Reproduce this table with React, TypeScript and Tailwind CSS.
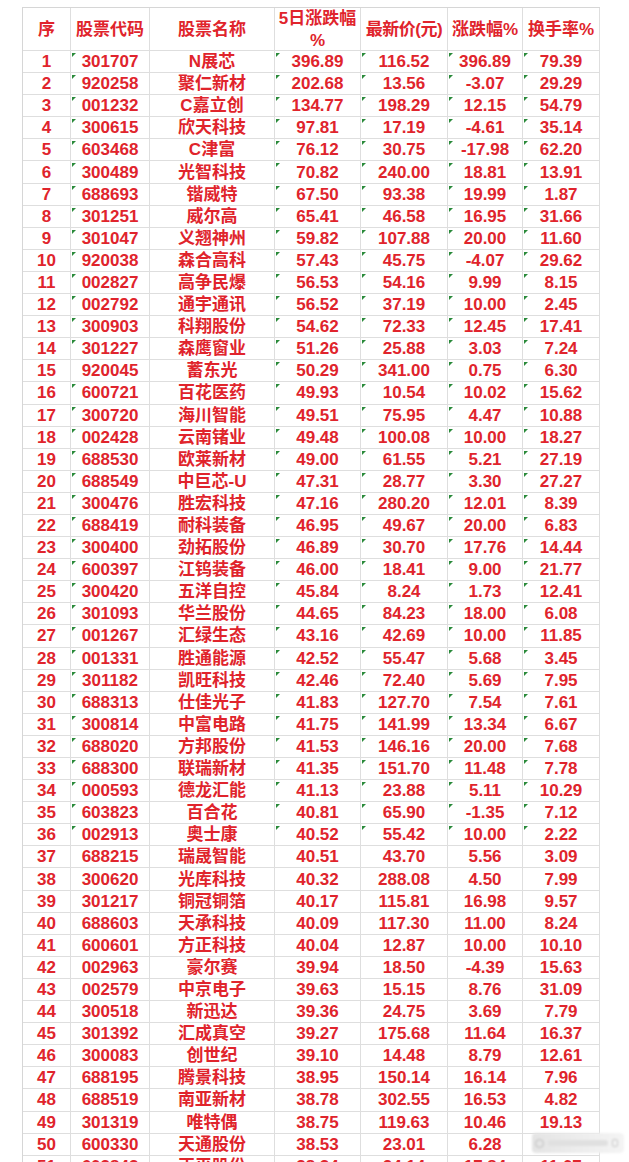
import React from "react"

type Row = [string, string, string, string, string, string, string]

// rows 1-36 carry the green "number stored as text" marker
const rows: Row[] = [
  ["1", "301707", "N展芯", "396.89", "116.52", "396.89", "79.39"],
  ["2", "920258", "聚仁新材", "202.68", "13.56", "-3.07", "29.29"],
  ["3", "001232", "C嘉立创", "134.77", "198.29", "12.15", "54.79"],
  ["4", "300615", "欣天科技", "97.81", "17.19", "-4.61", "35.14"],
  ["5", "603468", "C津富", "76.12", "30.75", "-17.98", "62.20"],
  ["6", "300489", "光智科技", "70.82", "240.00", "18.81", "13.91"],
  ["7", "688693", "锴威特", "67.50", "93.38", "19.99", "1.87"],
  ["8", "301251", "威尔高", "65.41", "46.58", "16.95", "31.66"],
  ["9", "301047", "义翘神州", "59.82", "107.88", "20.00", "11.60"],
  ["10", "920038", "森合高科", "57.43", "45.75", "-4.07", "29.62"],
  ["11", "002827", "高争民爆", "56.53", "54.16", "9.99", "8.15"],
  ["12", "002792", "通宇通讯", "56.52", "37.19", "10.00", "2.45"],
  ["13", "300903", "科翔股份", "54.62", "72.33", "12.45", "17.41"],
  ["14", "301227", "森鹰窗业", "51.26", "25.88", "3.03", "7.24"],
  ["15", "920045", "蓄东光", "50.29", "341.00", "0.75", "6.30"],
  ["16", "600721", "百花医药", "49.93", "10.54", "10.02", "15.62"],
  ["17", "300720", "海川智能", "49.51", "75.95", "4.47", "10.88"],
  ["18", "002428", "云南锗业", "49.48", "100.08", "10.00", "18.27"],
  ["19", "688530", "欧莱新材", "49.00", "61.55", "5.21", "27.19"],
  ["20", "688549", "中巨芯-U", "47.31", "28.77", "3.30", "27.27"],
  ["21", "300476", "胜宏科技", "47.16", "280.20", "12.01", "8.39"],
  ["22", "688419", "耐科装备", "46.95", "49.67", "20.00", "6.83"],
  ["23", "300400", "劲拓股份", "46.89", "30.70", "17.76", "14.44"],
  ["24", "600397", "江钨装备", "46.00", "18.41", "9.00", "21.77"],
  ["25", "300420", "五洋自控", "45.84", "8.24", "1.73", "12.41"],
  ["26", "301093", "华兰股份", "44.65", "84.23", "18.00", "6.08"],
  ["27", "001267", "汇绿生态", "43.16", "42.69", "10.00", "11.85"],
  ["28", "001331", "胜通能源", "42.52", "55.47", "5.68", "3.45"],
  ["29", "301182", "凯旺科技", "42.46", "72.40", "5.69", "7.95"],
  ["30", "688313", "仕佳光子", "41.83", "127.70", "7.54", "7.61"],
  ["31", "300814", "中富电路", "41.75", "141.99", "13.34", "6.67"],
  ["32", "688020", "方邦股份", "41.53", "146.16", "20.00", "7.68"],
  ["33", "688300", "联瑞新材", "41.35", "151.70", "11.48", "7.78"],
  ["34", "000593", "德龙汇能", "41.13", "23.88", "5.11", "10.29"],
  ["35", "603823", "百合花", "40.81", "65.90", "-1.35", "7.12"],
  ["36", "002913", "奥士康", "40.52", "55.42", "10.00", "2.22"],
  ["37", "688215", "瑞晟智能", "40.51", "43.70", "5.56", "3.09"],
  ["38", "300620", "光库科技", "40.32", "288.08", "4.50", "7.99"],
  ["39", "301217", "铜冠铜箔", "40.17", "115.81", "16.98", "9.57"],
  ["40", "688603", "天承科技", "40.09", "117.30", "11.00", "8.24"],
  ["41", "600601", "方正科技", "40.04", "12.87", "10.00", "10.10"],
  ["42", "002963", "豪尔赛", "39.94", "18.50", "-4.39", "15.63"],
  ["43", "002579", "中京电子", "39.63", "15.15", "8.76", "31.09"],
  ["44", "300518", "新迅达", "39.36", "24.75", "3.69", "7.79"],
  ["45", "301392", "汇成真空", "39.27", "175.68", "11.64", "16.37"],
  ["46", "300083", "创世纪", "39.10", "14.48", "8.79", "12.61"],
  ["47", "688195", "腾景科技", "38.95", "150.14", "16.14", "7.96"],
  ["48", "688519", "南亚新材", "38.78", "302.55", "16.53", "4.82"],
  ["49", "301319", "唯特偶", "38.75", "119.63", "10.46", "19.13"],
  ["50", "600330", "天通股份", "38.53", "23.01", "6.28", ""],
  ["51", "603843", "正平股份", "38.34", "24.14", "17.84", "11.07"],
]

const cell =
  "relative flex items-center justify-center border-b border-r border-[#dedede] text-[#e0242c] font-bold leading-none"

function Marker() {
  return (
    <span className="absolute left-[1px] top-[2px] h-0 w-0 border-t-[4px] border-r-[4px] border-t-[#2a8a3a] border-r-transparent" />
  )
}

export default function App() {
  return (
    <div
      className="relative h-[1162px] overflow-hidden bg-white pl-[22px] pt-[7px]"
      style={{ fontFamily: '"Liberation Sans", "Noto Sans CJK SC", sans-serif' }}
    >
      <div className="grid w-[578px] grid-cols-[48px_79px_125px_86px_87px_75px_77px] border-l border-t border-[#d6d6d6] text-[17px]">
        {/* Header */}
        <div className={`${cell} h-[43px]`}>序</div>
        <div className={`${cell} h-[43px]`}>股票代码</div>
        <div className={`${cell} h-[43px]`}>股票名称</div>
        <div className={`${cell} h-[43px] flex-col gap-[5px]`}>
          <span>5日涨跌幅</span>
          <span>%</span>
        </div>
        <div className={`${cell} h-[43px] tracking-[-0.5px]`}>最新价(元)</div>
        <div className={`${cell} h-[43px]`}>涨跌幅%</div>
        <div className={`${cell} h-[43px]`}>换手率%</div>

        {rows.map((r, i) => {
          const marked = i < 36
          return (
            <React.Fragment key={r[0]}>
              <div className={`${cell} h-[22.1px]`}>{r[0]}</div>
              <div className={`${cell} h-[22.1px]`}>
                {marked && r[0] !== "15" && <Marker />}
                {r[1]}
              </div>
              <div className={`${cell} h-[22.1px]`}>{r[2]}</div>
              {r.slice(3).map((v, j) => (
                <div key={j} className={`${cell} h-[22.1px]`}>
                  {marked && <Marker />}
                  {v}
                </div>
              ))}
            </React.Fragment>
          )
        })}
      </div>

      {/* watermark over the last full row */}
      <div className="absolute left-[532px] top-[1133px] flex h-[20px] w-[92px] items-center gap-[4px] rounded-[4px] bg-gradient-to-r from-[#e4e4e4] via-[#ededed] to-[#f4f4f4] px-[3px] blur-[1px]">
        <span className="h-[9px] w-[9px] rounded-full border border-[#bdbdbd]" />
        <span className="h-[6px] w-[60px] rounded-full bg-[#e0e0e0]" />
        <span className="h-[8px] w-[6px] rounded-[2px] border border-[#c8c8c8]" />
      </div>
    </div>
  )
}
